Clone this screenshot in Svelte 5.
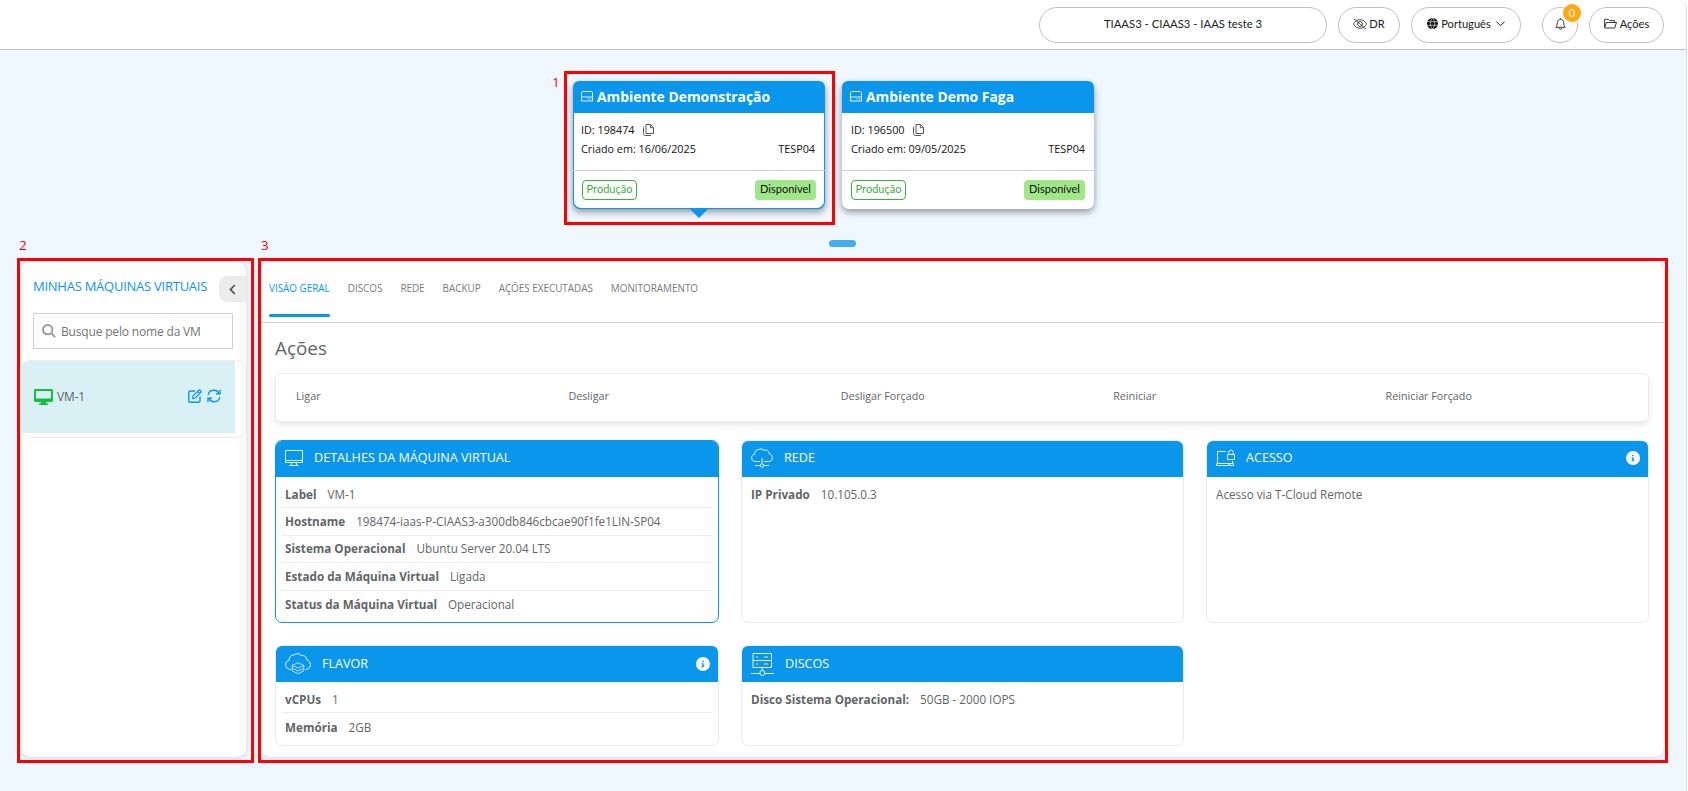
<script lang="ts">
    type Row = { label?: string; value: string };
    type Panel = { title: string; icon: string; active?: boolean; info?: boolean; rows: Row[] };

    let search: string = '';
    let activeTab: string = 'VISÃO GERAL';
    let selectedId: string = '198474';

    const environments = [
        {id: '198474', name: 'Ambiente Demonstração', created: '16/06/2025', site: 'TESP04'},
        {id: '196500', name: 'Ambiente Demo Faga', created: '09/05/2025', site: 'TESP04'},
    ];

    const tabs: string[] = ['VISÃO GERAL', 'DISCOS', 'REDE', 'BACKUP', 'AÇÕES EXECUTADAS', 'MONITORAMENTO'];
    const actions: string[] = ['Ligar', 'Desligar', 'Desligar Forçado', 'Reiniciar', 'Reiniciar Forçado'];

    const panels: Panel[] = [
        {title: 'DETALHES DA MÁQUINA VIRTUAL', icon: 'monitor', active: true, rows: [
            {label: 'Label', value: 'VM-1'},
            {label: 'Hostname', value: '198474-iaas-P-CIAAS3-a300db846cbcae90f1fe1LIN-SP04'},
            {label: 'Sistema Operacional', value: 'Ubuntu Server 20.04 LTS'},
            {label: 'Estado da Máquina Virtual', value: 'Ligada'},
            {label: 'Status da Máquina Virtual', value: 'Operacional'},
        ]},
        {title: 'REDE', icon: 'network', rows: [{label: 'IP Privado', value: '10.105.0.3'}]},
        {title: 'ACESSO', icon: 'access', info: true, rows: [{value: 'Acesso via T-Cloud Remote'}]},
        {title: 'FLAVOR', icon: 'flavor', info: true, rows: [
            {label: 'vCPUs', value: '1'},
            {label: 'Memória', value: '2GB'},
        ]},
        {title: 'DISCOS', icon: 'disks', rows: [{label: 'Disco Sistema Operacional:', value: '50GB - 2000 IOPS'}]},
    ];
</script>

{#snippet panelIcon(name: string)}
    {#if name === 'monitor'}
        <svg class="line-icon" width="18" height="18" viewBox="0 0 18 18">
            <path d="M.5 1.5h17v12H.5zM.5 11.5h17M7 13.5l-1 2.5M11 13.5l1 2.5M4.500 16.500h9" />
        </svg>
    {:else if name === 'network'}
        <svg class="line-icon" width="22" height="20" viewBox="0 0 22 20">
            <path d="M9 13.500H4.500C2 13.500.6 11.800.6 9.800c0-1.900 1.300-3.200 3-3.500C3.400 3.500 5.300 1.800 7.600 1.500c1.500-.9 4.200-.8 5.400.8 3-.9 5.300.9 5.400 3.700 1.900.6 3 2 3 3.700 0 2.200-1.500 3.800-3.900 3.800H13M11 10v5.500M4 17.500h5M13 17.500h5" />
            <circle cx="11" cy="17.500" r="1.700" />
        </svg>
    {:else if name === 'access'}
        <svg class="line-icon" width="19" height="18" viewBox="0 0 19 18">
            <path d="M1.500 14V2.500H10M.5 14.500h17v2H.5zM16.500 12v2M12 16h3" />
            <path d="M11.500 5.500h7v5h-7zM12.800 5.500V3.200a2.200 2.200 0 0 1 4.400 0v2.300" />
        </svg>
    {:else if name === 'flavor'}
        <svg class="line-icon" width="26" height="22" viewBox="0 0 26 22">
            <path d="M6 16.500C2.800 16.500.6 14.500.6 11.700c0-2.300 1.500-4 3.600-4.400C4 4 6 2 9 1.900c1.800-1.700 5.700-1.600 7.200.7 3-.6 5.500 1.400 5.600 4.300 2.200.8 3.600 2.500 3.600 4.700 0 2.700-1.900 4.700-4.700 4.900" />
            <path stroke-width=".7" d="M13 9.700l5.800 2.600L13 15l-5.800-2.700zM7.200 12.300v5.600L13 20.700l5.800-2.800v-5.600M7.200 15.200L13 18l5.800-2.800" />
        </svg>
    {:else}
        <svg class="line-icon" width="23" height="24" viewBox="0 0 23 24">
            <path d="M2 1.500h18.500v14H2zM2 8.500h18.500M5 5h2M13 5h4M5 12h2M13 12h4M11.300 15.500V18M0 21.500h8.500M14 21.500h9" />
            <circle cx="11.300" cy="21" r="2.500" />
        </svg>
    {/if}
{/snippet}

<div class="page">
    <header>
        <button class="pill client">TIAAS3 - CIAAS3 - IAAS teste 3</button>
        <button class="pill dr">
            <svg width="14" height="12" viewBox="0 0 14 12" fill="none" stroke="currentColor" stroke-width=".8">
                <path d="M.5 6C2 3.200 4.200 1.700 7 1.700S12 3.200 13.500 6C12 8.800 9.800 10.300 7 10.300S2 8.800.5 6zM1 .8l12 10.400" />
                <circle cx="7" cy="6" r="2.500" />
            </svg>
            DR
        </button>
        <button class="pill language">
            <svg width="11" height="11" viewBox="0 0 11 11">
                <circle cx="5.500" cy="5.500" r="5.500" fill="#111" />
                <path d="M0 3.700h11M0 7.300h11M5.500 0C2.600 3 2.600 8 5.500 11M5.500 0C8.400 3 8.400 8 5.500 11" fill="none" stroke="#fff" stroke-width=".6" />
            </svg>
            <span>Português</span>
            <svg class="chevron" width="9" height="6" viewBox="0 0 9 6" fill="none" stroke="currentColor">
                <path d="M.4.6l4.100 4.200L8.600.6" />
            </svg>
        </button>
        <button class="pill bell" aria-label="Notificações">
            <svg width="11" height="12" viewBox="0 0 11 12" fill="none" stroke="currentColor" stroke-width=".9">
                <path d="M5.500.3v1M.7 9.300h9.600C8.800 8 8.900 6.600 8.700 4.600 8.500 2.600 7.200 1.300 5.500 1.300S2.500 2.600 2.300 4.600C2.100 6.600 2.200 8 .7 9.300z" />
                <path d="M4 10c.2 1.700 2.800 1.700 3 0" />
            </svg>
            <span class="count">0</span>
        </button>
        <button class="pill menu">
            <svg width="13" height="11" viewBox="0 0 13 11" fill="none" stroke="currentColor" stroke-width=".9">
                <path d="M.6 9.500V1.300h3.800l1.200 1.300h4.800v1.900M.6 9.700l1.700-5.200h10.200L10.700 10H1z" />
            </svg>
            Ações
        </button>
    </header>

    <section class="environments">
        {#each environments as env}
            <div class="env-slot">
                {#if env.id === selectedId}
                    <div class="mark mark-env"><span>1</span></div>
                {/if}
                <article class="env {env.id === selectedId ? 'selected' : ''}">
                    <h2>
                        <svg width="12" height="11" viewBox="0 0 12 11" fill="none" stroke="currentColor" stroke-width=".9">
                            <path d="M.5 6V1.500L1.300.5h9.400l.8 1v4.500M.5 6h11v4H.5zM6.500 8h1M8.500 8h1.500" />
                        </svg>
                        {env.name}
                    </h2>
                    <div class="env-info">
                        <p>
                            ID: {env.id}
                            <svg width="11" height="12" viewBox="0 0 11 12" fill="none" stroke="#444">
                                <path d="M3 .5h4.500l3 3v6H3zM7.300.7v3h3M1 2.500C.5 3 .5 3 .5 4v5.500c0 1.300.7 2 2 2H8" stroke-width=".9" />
                            </svg>
                        </p>
                        <p><span>Criado em: {env.created}</span><span>{env.site}</span></p>
                    </div>
                    <footer>
                        <span class="badge outline">Produção</span>
                        <span class="badge filled">Disponível</span>
                    </footer>
                </article>
            </div>
        {/each}
    </section>

    <div class="handle"></div>

    <div class="workspace">
        <aside>
            <div class="mark mark-list"><span>2</span></div>
            <div class="list-title">
                <h3>MINHAS MÁQUINAS VIRTUAIS</h3>
                <button class="collapse" aria-label="Recolher">
                    <svg width="7" height="11" viewBox="0 0 7 11" fill="none" stroke="#555" stroke-width="1.800">
                        <path d="M5.800 1L1.500 5.500 5.800 10" />
                    </svg>
                </button>
            </div>
            <label class="search">
                <svg width="14" height="14" viewBox="0 0 14 14" fill="none" stroke="#999" stroke-width="1.900">
                    <circle cx="5.700" cy="5.700" r="4.700" />
                    <path d="M9.200 9.200l4 4" />
                </svg>
                <input bind:value={search} placeholder="Busque pelo nome da VM" />
            </label>
            <div class="vm-card">
                <div class="vm">
                    <svg width="19" height="16" viewBox="0 0 19 16">
                        <path fill="#12bf40" fill-rule="evenodd" d="M1.500 0h16C18.500 0 19 .6 19 1.500v10c0 .9-.5 1.500-1.500 1.500H12l.5 1.500H14V16H5v-1.500h1.500L7 13H1.500C.5 13 0 12.400 0 11.500v-10C0 .6.500 0 1.500 0zM2 2v7.500h15V2z" />
                    </svg>
                    <span>VM-1</span>
                    <svg class="vm-action" width="14" height="14" viewBox="0 0 14 14" fill="none" stroke="#0a96ea" stroke-width="1.400">
                        <path d="M7 2H2.300C1.300 2 .8 2.500.8 3.500v8.200c0 1 .5 1.500 1.500 1.500h8.200c1 0 1.500-.5 1.500-1.500V7.500" />
                        <path d="M4.600 9.500l.5-2.600L11 1c.6-.6 2.700 1.300 2.100 2L7.200 9zM9.500 2.500l2.100 2.100" stroke-width="1.200" />
                    </svg>
                    <svg class="vm-action" width="14" height="14" viewBox="0 0 14 14" fill="none" stroke="#0a96ea" stroke-width="1.400">
                        <path d="M1.200 6C1.600 3.200 4 1.300 7 1.300c2.200 0 4 1 5.200 3M12.800 8c-.4 2.800-2.800 4.700-5.800 4.700-2.200 0-4-1-5.200-3" />
                        <path d="M13 .8v4H9M1 13.200v-4h4" />
                    </svg>
                </div>
            </div>
        </aside>

        <main>
            <div class="mark mark-main"><span>3</span></div>
            <nav>
                {#each tabs as tab}
                    <button class="tab {tab === activeTab ? 'active' : ''}" on:click={() => activeTab = tab}>{tab}</button>
                {/each}
            </nav>
            <div class="content">
                <h1>Ações</h1>
                <div class="actions">
                    {#each actions as action}
                        <button>{action}</button>
                    {/each}
                </div>
                <div class="panels">
                    {#each panels as {title, icon, active, info, rows}}
                        <section class="panel {active ? 'active' : ''}">
                            <h4>
                                {@render panelIcon(icon)}
                                <span>{title}</span>
                                {#if info}
                                    <svg class="info" width="14" height="14" viewBox="0 0 14 14">
                                        <circle cx="7" cy="7" r="7" fill="#fff" />
                                        <path d="M6.200 3.800h1.600v1.300H6.200zM5.700 6.200h2v3h.6v1H5.500v-1h.7v-2h-.5z" fill="#0a96ea" />
                                    </svg>
                                {/if}
                            </h4>
                            <div class="rows">
                                {#each rows as {label, value}}
                                    <p>
                                        {#if label}<strong>{label}</strong>{/if}
                                        <span>{value}</span>
                                    </p>
                                {/each}
                            </div>
                        </section>
                    {/each}
                </div>
            </div>
        </main>
    </div>
</div>

<style>
    :global(body) {
        background: #fff;
        overflow: hidden;
    }

    .page {
        box-sizing: border-box;
        width: 1687px;
        height: 791px;
        overflow: hidden;
        background: #eff7ff;
        border-right: 1px solid #d9dadd;
        border-top-right-radius: 9px;
        font-family: "Open Sans", "Noto Sans", sans-serif;
        color: #626568;
    }

    .page *, .page *::after {
        box-sizing: border-box;
    }

    h1, h2, h3, h4, p {
        margin: 0;
        font-weight: 400;
    }

    button {
        padding: 0;
        border: none;
        background: none;
        font-family: inherit;
        color: inherit;
        cursor: pointer;
    }

    svg {
        flex: none;
    }

    header {
        display: flex;
        justify-content: flex-end;
        height: 50px;
        padding: 7px 22px 0 0;
        background: #fff;
        border-bottom: 1px solid #bcbfc8;
    }

    .pill {
        position: relative;
        display: flex;
        align-items: center;
        justify-content: center;
        height: 36px;
        padding-bottom: 3px;
        border: 1px solid #bcbfc8;
        border-radius: 18px;
        font-family: Lato, "Open Sans", sans-serif;
        font-size: 11.1px;
        color: #222;
    }

    .client {
        width: 288px;
        margin-right: 11px;
        font-size: 11.3px;
    }

    .dr {
        gap: 2px;
        width: 62px;
        margin-right: 11px;
    }

    .language {
        gap: 3px;
        width: 110px;
        margin-right: 21px;
    }

    .chevron {
        margin-left: 2px;
    }

    .bell {
        width: 36px;
        margin-right: 11px;
    }

    .menu {
        gap: 3px;
        width: 75px;
    }

    .count {
        position: absolute;
        top: -4px;
        right: -4px;
        width: 18px;
        height: 18px;
        border-radius: 9px;
        background: #ffa90f;
        line-height: 17px;
        color: #fff;
    }

    .environments {
        display: flex;
        justify-content: center;
        padding: 31px 2px 0 0;
    }

    .env-slot {
        position: relative;
        margin-right: 17px;
    }

    .env {
        position: relative;
        width: 252px;
        height: 128px;
        border-radius: 7px;
        background: #fff;
        box-shadow: 0 3px 7px rgba(0, 0, 0, 0.4);
        font-size: 10.8px;
        color: #111;
    }

    .selected::after {
        content: '';
        position: absolute;
        left: 117px;
        top: 128px;
        border: 9px solid transparent;
        border-top-color: #0a96ea;
        border-bottom: none;
    }

    .env h2 {
        display: flex;
        align-items: center;
        gap: 4px;
        height: 32px;
        padding: 0 8px 1px;
        border-radius: 6px 6px 0 0;
        background: #0a96ea;
        font-size: 13.9px;
        font-weight: 700;
        color: #fff;
    }

    .env-info {
        height: 57px;
        padding: 7px 9px 0;
    }

    .selected .env-info {
        padding-left: 8px;
        padding-right: 10px;
    }

    .env-info p {
        display: flex;
        align-items: center;
        justify-content: space-between;
        height: 19px;
    }

    .env-info p:first-child {
        justify-content: flex-start;
        gap: 8px;
    }

    .env footer {
        display: flex;
        justify-content: space-between;
        padding: 9px 9px 0;
        border-top: 1px solid #cdd1d8;
    }

    .selected footer, .selected .env-info {
        box-shadow: inset 1px 0 #0a96ea, inset -1px 0 #0a96ea;
    }

    .selected footer {
        height: 39px;
        border-radius: 0 0 7px 7px;
        box-shadow: inset 1px -1px #0a96ea, inset -1px -1px #0a96ea;
    }

    .badge {
        height: 20px;
        border-radius: 4px;
        font-family: Lato, "Open Sans", sans-serif;
        font-size: 11px;
        line-height: 18px;
        text-align: center;
    }

    .outline {
        width: 55px;
        border: 1px solid #3fae3f;
        line-height: 16px;
        color: #3fae3f;
    }

    .filled {
        width: 61px;
        background: #a0e789;
    }

    .handle {
        width: 27px;
        height: 7px;
        margin: 31px 0 0 829px;
        border-radius: 4px;
        background: #42aef0;
    }

    .workspace {
        display: flex;
        gap: 14px;
        margin: 15px 22px 0 21px;
    }

    aside, main {
        position: relative;
        height: 495px;
        border-radius: 10px;
        background: #fff;
        box-shadow: 0 1px 7px rgba(60, 90, 110, 0.16);
    }

    aside {
        width: 225px;
    }

    main {
        flex: 1;
    }

    /* numbered red callouts drawn over each area */
    .mark {
        position: absolute;
        z-index: 2;
        border: 3px solid #f00;
        pointer-events: none;
    }

    .mark span {
        position: absolute;
        font-size: 13.5px;
        line-height: 18px;
        color: #f00;
    }

    .mark-env {
        inset: -10px -10px -16px -9px;
    }

    .mark-env span {
        left: -15px;
        top: -1px;
    }

    .mark-list {
        inset: -4px -8px -6px -4px;
    }

    .mark-list span {
        left: -1px;
        top: -25px;
    }

    .mark-main {
        inset: -4px -4px -6px -2px;
    }

    .mark-main span {
        left: 0;
        top: -25px;
    }

    .list-title {
        display: flex;
        align-items: center;
        justify-content: space-between;
        padding: 14px 0 0 12px;
    }

    h3 {
        margin-top: -6px;
        font-size: 13px;
        letter-spacing: -0.25px;
        color: #0a96ea;
    }

    .collapse {
        display: flex;
        align-items: center;
        width: 27px;
        height: 26px;
        padding-left: 10px;
        border-radius: 8px 0 0 8px;
        background: #ececec;
    }

    .search {
        display: flex;
        align-items: center;
        gap: 5px;
        width: 200px;
        height: 36px;
        margin: 11px 0 0 12px;
        padding-left: 8px;
        border: 1px solid #cdd1d7;
    }

    input {
        width: 160px;
        padding: 0;
        border: none;
        outline: none;
        background: none;
        font: 12px "Open Sans", "Noto Sans", sans-serif;
        letter-spacing: -0.17px;
    }

    input::placeholder {
        color: #747474;
    }

    .vm-card {
        height: 78px;
        margin-top: 11px;
        border: 1px solid #eee;
        border-radius: 9px;
    }

    .vm {
        display: flex;
        align-items: center;
        width: 213px;
        height: 72px;
        padding-left: 12px;
        border-radius: 8px 0 0 0;
        background: #d9f0f5;
        font-size: 12px;
        letter-spacing: -0.15px;
    }

    .vm span {
        width: 131px;
        margin: -1px 0 0 4px;
    }

    .vm-action {
        margin-top: -2px;
    }

    .vm-action:last-child {
        margin-left: 5px;
    }

    nav {
        display: flex;
        gap: 18px;
        height: 61px;
        padding: 0 9px 5px;
        border-bottom: 1px solid #cfd2d9;
    }

    .tab {
        position: relative;
        padding-bottom: 3px;
        font-size: 9.9px;
        color: #77797c;
    }

    .tab.active {
        color: #0a96ea;
    }

    .tab.active::after {
        content: '';
        position: absolute;
        left: 0;
        bottom: 0;
        width: 100%;
        height: 3px;
        border-radius: 2px;
        background: #0a96ea;
    }

    .content {
        padding: 13px 15px 0;
    }

    h1 {
        font-size: 18.9px;
        line-height: 24px;
    }

    .actions {
        display: grid;
        grid-template-columns: repeat(5, 1fr);
        height: 49px;
        margin-top: 13px;
        padding: 0 5px;
        border: 1px solid #ececec;
        border-radius: 6px;
        box-shadow: 0 3px 6px rgba(0, 0, 0, 0.1);
    }

    .actions button {
        padding: 0 0 3px 15px;
        font-size: 10.75px;
        text-align: left;
    }

    .panels {
        display: grid;
        grid-template-columns: 444px 443px 443px;
        grid-template-rows: 183px 101px;
        justify-content: space-between;
        row-gap: 22px;
        margin-top: 18px;
    }

    .panel {
        border: 1px solid #ececec;
        border-radius: 7px;
    }

    .panel.active {
        border-color: #0a96ea;
    }

    h4 {
        display: flex;
        align-items: center;
        gap: 11px;
        height: 36px;
        padding: 0 8px 1px 9px;
        border-radius: 6px 6px 0 0;
        background: #0a96ea;
        font-size: 12.6px;
        color: #fff;
    }

    .panel:nth-child(-n+3) h4 {
        padding-bottom: 3px;
    }

    .line-icon {
        fill: none;
        stroke: #fff;
        stroke-width: 0.9;
    }

    .info {
        margin-left: auto;
    }

    .rows {
        padding: 4px 5px 0;
    }

    .rows p {
        display: flex;
        align-items: center;
        gap: 11px;
        height: 27.4px;
        padding: 0 4px 1px;
        border-bottom: 1px solid #ececec;
        font-size: 11.7px;
    }

    .rows p:last-child {
        border-bottom: none;
    }

    .rows strong {
        font-weight: 700;
    }
</style>
